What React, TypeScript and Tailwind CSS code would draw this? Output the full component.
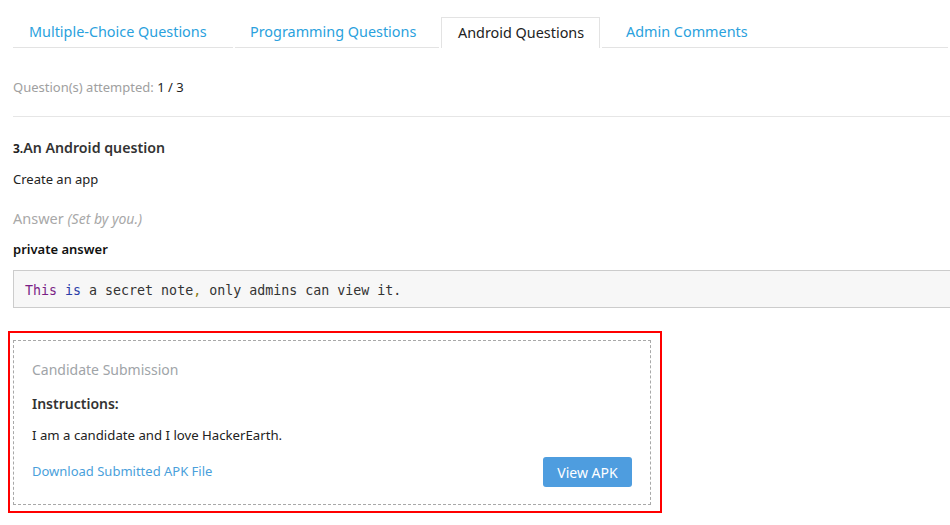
const tabs = [
  { label: 'Multiple-Choice Questions', width: 'w-[220px] pl-4' },
  { label: 'Programming Questions', width: 'w-[204px] pl-[15px]' },
  { label: 'Android Questions', width: 'w-[159px] pl-4', active: true },
  { label: 'Admin Comments', width: 'flex-1 pl-6' },
];

export default function App() {
  return (
    <div
      className="w-[950px] h-[525px] overflow-hidden bg-white pl-[13px] text-[#333]"
      style={{ fontFamily: '"Noto Sans", "Open Sans", sans-serif' }}
    >
      {/* tabs */}
      <div className="flex pt-[17px]">
        {tabs.map((t) =>
          t.active ? (
            <div
              key={t.label}
              className={`${t.width} mr-[2px] flex h-[31px] items-center border border-b-0 border-[#e3e3e3] text-[14.4px] text-[#222]`}
            >
              {t.label}
            </div>
          ) : (
            <div
              key={t.label}
              className={`${t.width} mr-[2px] flex h-[31px] items-center border-b border-[#e3e3e3] text-[14.4px] text-[#2aa1dd]`}
            >
              {t.label}
            </div>
          )
        )}
      </div>

      <p className="mt-[29px] text-[13px] leading-5 text-[#a0a0a0]">
        Question(s) attempted: <span className="text-[#222]">1 / 3</span>
      </p>
      <div className="mt-[19px] border-t border-[#e6e6e6]" />

      <h3 className="mt-[21px] text-[14.2px] leading-5 font-semibold text-[#333]">
        <span className="text-[12px] font-bold text-[#222]">3.</span>An Android question
      </h3>
      <p className="mt-[10px] text-[13px] leading-5 text-[#222]">Create an app</p>

      <p className="mt-[19px] text-[14.5px] leading-5 text-[#a8a8a8]">
        Answer <span className="text-[14px] italic">(Set by you.)</span>
      </p>
      <p className="mt-[10px] text-[13px] leading-5 font-semibold text-[#111]">private answer</p>

      <div
        className="mt-[11px] flex h-[38px] items-center border-y border-l border-[#cccccc] bg-[#f7f7f7] pl-[11px] pt-[3px] text-[13.3px] text-[#333]"
        style={{ fontFamily: '"DejaVu Sans Mono", "Liberation Mono", monospace' }}
      >
        <span className="text-[#7b1f86]">This</span>&nbsp;
        <span className="text-[#2a3ea8]">is</span>&nbsp;a secret note
        <span className="text-[#8a7a10]">,</span>&nbsp;only admins can view it.
      </div>

      {/* candidate submission */}
      <div className="mt-[23px] -ml-[5px] w-[654px] border-2 border-[#ff0000] pt-[7px] pl-[3px] pr-[9px] pb-[6px]">
        <div className="border border-dashed border-[#a8a8a8] px-[18px] pt-[19px] pb-[17px]">
          <p className="text-[14px] leading-5 text-[#a0a4a8]">Candidate Submission</p>
          <p className="mt-[14px] text-[14px] leading-5 font-semibold text-[#333]">Instructions:</p>
          <p className="mt-[11px] text-[13.2px] leading-5 text-[#222]">I am a candidate and I love HackerEarth.</p>
          <div className="mt-[12px] flex items-center justify-between">
            <a className="text-[13px] text-[#4a9fdb]">Download Submitted APK File</a>
            <button className="h-[30px] w-[89px] rounded-[3px] bg-[#4e9ddf] text-[14px] text-white">View APK</button>
          </div>
        </div>
      </div>
    </div>
  );
}
